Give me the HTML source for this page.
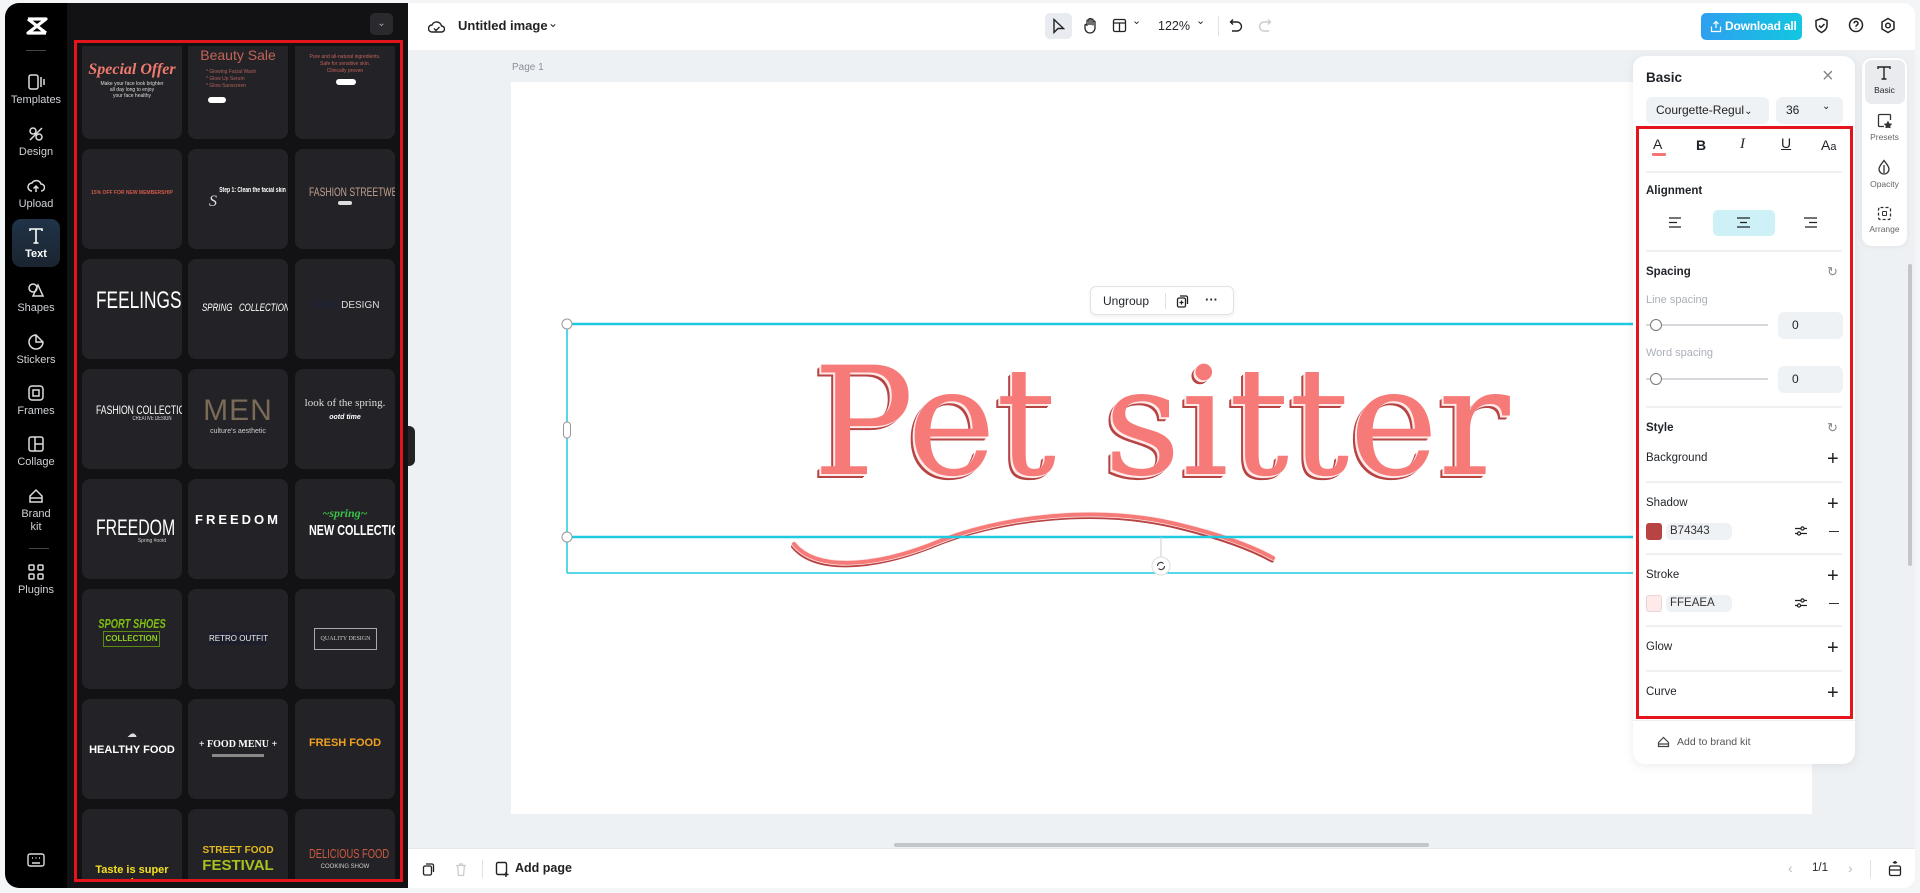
<!DOCTYPE html>
<html><head><meta charset="utf-8"><style>
*{box-sizing:border-box;margin:0;padding:0}
body{width:1920px;height:893px;overflow:hidden;background:#f4f5f7;font-family:"Liberation Sans",sans-serif;position:relative}
.a{position:absolute}
#rail{left:5px;top:3px;width:62px;height:885px;background:#000;border-radius:14px 0 0 14px}
#lp{left:67px;top:3px;width:341px;height:885px;background:#121214}
.ri{position:absolute;left:0;width:62px;text-align:center;color:#cfd2d6;font-size:11px}
.ri svg{display:block;margin:0 auto 3px}
.card{position:absolute;width:100px;height:100px;background:#232327;border-radius:8px;overflow:hidden;text-align:center;color:#fff}
.card div{position:absolute;left:0;right:0;text-align:center;white-space:nowrap}
.n{transform:scaleX(.72)}
#top{left:408px;top:3px;width:1507px;height:47px;background:#fff;border-radius:0 12px 0 0}
#cv{left:408px;top:50px;width:1507px;height:798px;background:#eef1f4}
#bot{left:408px;top:848px;width:1507px;height:40px;background:#fff;border-radius:0 0 12px 0;border-top:1px solid #e6e8eb}
#rp{left:1633px;top:56px;width:222px;height:708px;background:#fff;border-radius:12px;box-shadow:0 2px 10px rgba(0,0,0,.08)}
.lbl{position:absolute;font-size:12.5px;color:#1f2328;font-weight:bold}
.tx{position:absolute;font-size:12.5px;color:#1f2328;white-space:nowrap}
.hr{position:absolute;left:13px;width:196px;height:2px;background:#eef0f2}
.plus{position:absolute;left:194px;font-size:20px;color:#222;line-height:1}
.inp{position:absolute;background:#eff2f5;border-radius:6px;font-size:12px;color:#222}
</style></head><body>

<div id="rail" class="a">
 <svg class="a" style="left:21px;top:14px" width="22" height="18" viewBox="0 0 22 18"><path d="M2 2h18L2 16h18M2 2l18 14" stroke="#fff" stroke-width="3.2" fill="none" stroke-linejoin="round"/></svg>
 <div class="a" style="left:21px;top:47px;width:20px;height:1px;background:#444"></div>
 <div class="ri" style="top:70px"><svg width="18" height="18" viewBox="0 0 18 18" fill="none" stroke="#ddd" stroke-width="1.5"><rect x="2" y="2" width="9" height="14" rx="2"/><path d="M14 4v10M17 6v6"/></svg>Templates</div>
 <div class="ri" style="top:122px"><svg width="18" height="18" viewBox="0 0 18 18" fill="none" stroke="#ddd" stroke-width="1.5"><circle cx="6" cy="6" r="3"/><circle cx="12" cy="12" r="3"/><path d="M3 15L15 3"/></svg>Design</div>
 <div class="ri" style="top:174px"><svg width="18" height="18" viewBox="0 0 18 18" fill="none" stroke="#ddd" stroke-width="1.5"><path d="M5 14a4 4 0 0 1 0-8 5 5 0 0 1 9 1 3.5 3.5 0 0 1 0 7M9 15V9M6.5 11.5L9 9l2.5 2.5"/></svg>Upload</div>
 <div class="a" style="left:7px;top:216px;width:48px;height:48px;border-radius:9px;background:linear-gradient(#1f3348,#1b2430)"></div>
 <div class="ri" style="top:224px;color:#fff;font-weight:bold"><svg width="18" height="18" viewBox="0 0 18 18" fill="none" stroke="#fff" stroke-width="1.6"><path d="M3 4V2h12v2M9 2v14M6.5 16h5"/></svg>Text</div>
 <div class="ri" style="top:278px"><svg width="18" height="18" viewBox="0 0 18 18" fill="none" stroke="#ddd" stroke-width="1.5"><circle cx="6" cy="7" r="4"/><path d="M11 4l5 11H6z"/></svg>Shapes</div>
 <div class="ri" style="top:330px"><svg width="18" height="18" viewBox="0 0 18 18" fill="none" stroke="#ddd" stroke-width="1.5"><path d="M9 2a7 7 0 1 0 7 7l-7-7z M9 2v7h7"/></svg>Stickers</div>
 <div class="ri" style="top:381px"><svg width="18" height="18" viewBox="0 0 18 18" fill="none" stroke="#ddd" stroke-width="1.5"><rect x="2" y="2" width="14" height="14" rx="3"/><rect x="6" y="6" width="6" height="6"/></svg>Frames</div>
 <div class="ri" style="top:432px"><svg width="18" height="18" viewBox="0 0 18 18" fill="none" stroke="#ddd" stroke-width="1.5"><rect x="2" y="2" width="14" height="14" rx="2"/><path d="M8 2v14M8 9h8"/></svg>Collage</div>
 <div class="ri" style="top:484px;line-height:13px"><svg width="18" height="18" viewBox="0 0 18 18" fill="none" stroke="#ddd" stroke-width="1.5"><path d="M3 9l6-6 6 6v6H3z M3 11h12"/></svg>Brand<br>kit</div>
 <div class="a" style="left:24px;top:545px;width:20px;height:1px;background:#444"></div>
 <div class="ri" style="top:560px"><svg width="18" height="18" viewBox="0 0 18 18" fill="none" stroke="#ddd" stroke-width="1.5"><rect x="2" y="2" width="5" height="5" rx="1"/><rect x="11" y="2" width="5" height="5" rx="1"/><rect x="2" y="11" width="5" height="5" rx="1"/><rect x="11" y="11" width="5" height="5" rx="1"/></svg>Plugins</div>
 <svg class="a" style="left:22px;top:850px" width="18" height="15" viewBox="0 0 18 15" fill="none" stroke="#ddd" stroke-width="1.4"><rect x="1" y="1" width="16" height="12" rx="2"/><path d="M5 10h8M5 5h1M8.5 5h1M12 5h1"/></svg>
</div>

<div id="lp" class="a">
 <div class="a" style="left:303px;top:10px;width:23px;height:22px;background:#2a2a2e;border-radius:5px;color:#aaa;font-size:10px;text-align:center;line-height:22px">&#8964;</div>
</div>

<div class="a" style="left:74px;top:46px;width:329px;height:836px;overflow:hidden">
 <div class="card" style="left:8px;top:-7px"><div style="top:22px;font:italic bold 16px 'Liberation Serif',serif;color:#f07a6e">Special Offer</div><div style="top:42px;font-size:5px;color:#ddd;line-height:6px">Make your face look brighter<br>all day long to enjoy<br>your face healthy</div></div>
 <div class="card" style="left:114px;top:-7px"><div style="top:8px;font-size:14px;color:#c06458">Beauty Sale</div><div style="top:30px;font-size:5px;color:#b0605a;line-height:7px;left:18px;text-align:left">* Glowing Facial Wash<br>* Glow Up Serum<br>* Glow Sunscreen</div><div style="top:58px;left:20px;width:18px;height:6px;background:#fff;border-radius:3px"></div></div>
 <div class="card" style="left:221px;top:-7px"><div style="top:15px;font-size:5px;color:#c0605a;line-height:7px">Pure and all-natural ingredients.<br>Safe for sensitive skin.<br>Clinically proven</div><div style="top:40px;left:41px;width:20px;height:6px;background:#fff;border-radius:3px"></div></div>
 <div class="card" style="left:8px;top:103px"><div style="top:41px;font-size:5px;color:#d05a4a;font-weight:bold">15% OFF FOR NEW MEMBERSHIP</div></div>
 <div class="card" style="left:114px;top:103px"><div class="n" style="top:38px;font:bold 7px sans-serif;color:#fff;left:20px">Step 1: Clean the facial skin</div><div style="top:44px;left:-50px;font:italic 16px serif;color:#ddd">S</div></div>
 <div class="card" style="left:221px;top:103px"><div class="n" style="top:36px;font-size:12px;color:#c0a090">FASHION STREETWEAR</div><div style="top:52px;left:43px;width:14px;height:4px;background:#ddd;border-radius:2px"></div></div>
 <div class="card" style="left:8px;top:213px"><div class="n" style="top:28px;font:24px sans-serif;color:#fff">FEELINGS</div></div>
 <div class="card" style="left:114px;top:213px"><div class="n" style="top:43px;font:italic 11px sans-serif;color:#fff">SPRING&nbsp;&nbsp;&nbsp;COLLECTION</div></div>
 <div class="card" style="left:221px;top:213px"><div style="top:41px;font-size:10px;color:#ddd"><span style="color:#1d2240">GOOD</span>DESIGN</div></div>
 <div class="card" style="left:8px;top:323px"><div class="n" style="top:34px;font:12px sans-serif;color:#fff">FASHION COLLECTION</div><div class="n" style="top:47px;font:6px sans-serif;color:#ddd;left:40px">CREATIVE DESIGN</div></div>
 <div class="card" style="left:114px;top:323px"><div style="top:25px;font-size:30px;color:#7a6a58;letter-spacing:1px">MEN</div><div style="top:59px;font-size:7px;color:#ccc">culture's aesthetic</div></div>
 <div class="card" style="left:221px;top:323px"><div style="top:28px;font:11px 'Liberation Serif',serif;color:#ddd">look of the spring.</div><div style="top:45px;font:italic bold 7px sans-serif;color:#fff">ootd time</div></div>
 <div class="card" style="left:8px;top:433px"><div class="n" style="top:36px;font:22px sans-serif;color:#fff">FREEDOM</div><div style="top:59px;font-size:5px;color:#ccc;left:40px">Spring #ootd</div></div>
 <div class="card" style="left:114px;top:433px"><div style="top:33px;font:bold 13px sans-serif;color:#fff;letter-spacing:3px">FREEDOM</div></div>
 <div class="card" style="left:221px;top:433px"><div style="top:27px;font:italic bold 12px 'Liberation Serif',serif;color:#3cbf4a">~spring~</div><div class="n" style="top:43px;font:bold 15px sans-serif;color:#fff">NEW COLLECTION</div></div>
 <div class="card" style="left:8px;top:543px"><div class="n" style="top:27px;font:italic bold 13px sans-serif;color:#7fbf10">SPORT SHOES</div><div style="top:42px;left:21px;width:57px;height:16px;border:1px solid #5a8a10;font:bold 8px sans-serif;color:#8fcf1a;line-height:14px">COLLECTION</div></div>
 <div class="card" style="left:114px;top:543px"><div style="top:43px;left:21px;width:58px;height:13px;background:#1c1e2c;font:8px sans-serif;color:#eee;line-height:13px">RETRO OUTFIT</div></div>
 <div class="card" style="left:221px;top:543px"><div style="top:39px;left:19px;width:63px;height:22px;border:1px solid #aaa;font:6px 'Liberation Serif',serif;color:#ccc;line-height:20px">QUALITY DESIGN</div></div>
 <div class="card" style="left:8px;top:653px"><div style="top:45px;font:bold 11px sans-serif;color:#fff">HEALTHY FOOD</div><div style="top:30px;font-size:10px;color:#ddd">&#9729;</div></div>
 <div class="card" style="left:114px;top:653px"><div style="top:40px;font:bold 10px 'Liberation Serif',serif;color:#fff">+ FOOD MENU +</div><div style="top:55px;left:24px;width:52px;height:3px;background:#888"></div></div>
 <div class="card" style="left:221px;top:653px"><div style="top:38px;font:bold 11px sans-serif;color:#f0a020">FRESH FOOD</div></div>
 <div class="card" style="left:8px;top:763px"><div style="top:55px;font:bold 11px sans-serif;color:#f5e020">Taste is super</div><div style="top:68px;font:bold 11px sans-serif;color:#f5e020">spicy</div></div>
 <div class="card" style="left:114px;top:763px"><div style="top:36px;font:bold 10px sans-serif;color:#e0b820">STREET FOOD</div><div style="top:48px;font:bold 15px sans-serif;color:#a8c020">FESTIVAL</div></div>
 <div class="card" style="left:221px;top:763px"><div class="n" style="top:37px;font:13px sans-serif;color:#d05a40">DELICIOUS FOOD</div><div style="top:55px;font:6px sans-serif;color:#ccc">COOKING SHOW</div></div>
</div>
<div class="a" style="left:74px;top:40px;width:329px;height:842px;border:3px solid #e3141c"></div>

<div id="top" class="a">
 <svg class="a" style="left:20px;top:16px" width="17" height="15" viewBox="0 0 17 15" fill="none" stroke="#222" stroke-width="1.4"><path d="M4 13a3.5 3.5 0 0 1 0-7 5 5 0 0 1 9.5 1 3 3 0 0 1 0 6z M6 9.5l2 2 3.5-3.5"/></svg>
 <div class="tx" style="left:50px;top:15px;font-size:13px;font-weight:bold;color:#222">Untitled image</div>
 <div class="tx" style="left:140px;top:13px;font-size:12px">&#8964;</div>
 <div class="a" style="left:637px;top:10px;width:27px;height:26px;background:#e8ebef;border-radius:5px"></div>
 <svg class="a" style="left:644px;top:15px" width="13" height="16" viewBox="0 0 13 16" fill="none" stroke="#222" stroke-width="1.4"><path d="M2 1.5v13l4-4h5.5z"/></svg>
 <svg class="a" style="left:675px;top:14px" width="15" height="17" viewBox="0 0 15 17" fill="none" stroke="#222" stroke-width="1.3"><path d="M4 9V4a1 1 0 0 1 2 0v4V2.5a1 1 0 0 1 2 0V8V3a1 1 0 0 1 2 0v5.5V5a1 1 0 0 1 2 0v6a5 5 0 0 1-10 0L2 9a1 1 0 0 1 2-1"/></svg>
 <svg class="a" style="left:704px;top:15px" width="15" height="15" viewBox="0 0 15 15" fill="none" stroke="#222" stroke-width="1.3"><rect x="1.5" y="1.5" width="12" height="12" rx="1.5"/><path d="M1.5 5h12M7.5 5v8.5"/></svg>
 <div class="tx" style="left:724px;top:11px;font-size:11px">&#8964;</div>
 <div class="tx" style="left:750px;top:16px;font-size:12.5px">122%</div>
 <div class="tx" style="left:788px;top:11px;font-size:11px">&#8964;</div>
 <div class="a" style="left:810px;top:13px;width:1px;height:20px;background:#e0e2e5"></div>
 <svg class="a" style="left:821px;top:15px" width="14" height="15" viewBox="0 0 14 15" fill="none" stroke="#222" stroke-width="1.4"><path d="M4 1.5L1.5 4 4 6.5M1.5 4h6.5a4.5 4.5 0 0 1 0 9H3"/></svg>
 <svg class="a" style="left:850px;top:15px" width="14" height="15" viewBox="0 0 14 15" fill="none" stroke="#ccc" stroke-width="1.4"><path d="M10 1.5L12.5 4 10 6.5M12.5 4H6a4.5 4.5 0 0 0 0 9h5"/></svg>
 <div class="a" style="left:1293px;top:10px;width:101px;height:27px;border-radius:5px;background:linear-gradient(90deg,#2f9ff0,#12c6e0);color:#fff;font-size:12px;font-weight:bold;line-height:27px;padding-left:24px;white-space:nowrap;letter-spacing:-.2px">Download all</div>
 <svg class="a" style="left:1302px;top:17px" width="12" height="13" viewBox="0 0 12 13" fill="none" stroke="#fff" stroke-width="1.2"><path d="M6 8V1.5M3.5 4L6 1.5 8.5 4M1.5 6.5v5h9v-5"/></svg>
 <svg class="a" style="left:1406px;top:14px" width="15" height="17" viewBox="0 0 15 17" fill="none" stroke="#222" stroke-width="1.5"><path d="M7.5 1.5l5.5 2v5c0 3.5-2.5 5.5-5.5 7-3-1.5-5.5-3.5-5.5-7v-5z M5 8.5l2 2 3.5-3.5"/></svg>
 <svg class="a" style="left:1440px;top:14px" width="16" height="16" viewBox="0 0 16 16" fill="none" stroke="#222" stroke-width="1.5"><circle cx="8" cy="8" r="6.5"/><path d="M6 6.3a2 2 0 1 1 2.5 2c-.5.2-.5.7-.5 1.4M8 11.5v.5"/></svg>
 <svg class="a" style="left:1472px;top:14px" width="16" height="17" viewBox="0 0 16 17" fill="none" stroke="#222" stroke-width="1.5"><path d="M8 1.5l6 3.5v7l-6 3.5-6-3.5v-7z"/><circle cx="8" cy="8.5" r="2.3"/></svg>
</div>

<div id="cv" class="a">
 <div class="tx" style="left:104px;top:12px;font-size:10px;color:#8a9099">Page 1</div>
 <div class="a" style="left:103px;top:32px;width:1301px;height:732px;background:#fff"></div>
 <div class="a" style="left:486px;top:793px;width:535px;height:4px;background:#c2c5c9;border-radius:2px"></div>
 <div class="a" style="left:1500px;top:214px;width:4px;height:302px;background:#c2c5c9;border-radius:2px"></div>
</div>
<div class="a" style="left:408px;top:426px;width:7px;height:40px;background:#222;border-radius:0 6px 6px 0"></div>

<svg class="a" style="left:0;top:0" width="1920" height="893">
 <path d="M794 544 C815 570,870 568,930 545 C1000 515,1100 505,1180 525 C1225 536,1255 548,1273 558" fill="none" stroke="#b74343" stroke-width="4" stroke-linecap="round" transform="translate(-1 2.5)"/>
 <path d="M794 544 C815 570,870 568,930 545 C1000 515,1100 505,1180 525 C1225 536,1255 548,1273 558" fill="none" stroke="#ffeaea" stroke-width="5.5" stroke-linecap="round"/>
 <path d="M794 544 C815 570,870 568,930 545 C1000 515,1100 505,1180 525 C1225 536,1255 548,1273 558" fill="none" stroke="#f67b78" stroke-width="4" stroke-linecap="round"/>
 <line x1="567" y1="324" x2="1633" y2="324" stroke="#1ecbe0" stroke-width="2.5"/>
 <line x1="567" y1="537" x2="1633" y2="537" stroke="#1ecbe0" stroke-width="2.5"/>
 <line x1="567" y1="324" x2="567" y2="573" stroke="#1ecbe0" stroke-width="1.5"/>
 <line x1="567" y1="573" x2="1633" y2="573" stroke="#1ecbe0" stroke-width="1.5"/>
 <line x1="1161" y1="537" x2="1161" y2="560" stroke="#ccc" stroke-width="1"/>
 <circle cx="567" cy="324" r="5" fill="#fff" stroke="#999"/>
 <circle cx="567" cy="537" r="5" fill="#fff" stroke="#999"/>
 <rect x="563.5" y="422" width="7" height="16" rx="3.5" fill="#fff" stroke="#999"/>
 <circle cx="1161" cy="566" r="9" fill="#fff" stroke="#ddd"/>
 <path d="M1157.5 566a3.5 3.5 0 0 1 6-2.5M1164.5 566a3.5 3.5 0 0 1-6 2.5" stroke="#444" stroke-width="1.2" fill="none"/>
</svg>
<div class="a" style="left:813px;top:348px;font:150px 'DejaVu Serif',serif;color:#f67b78;line-height:150px;text-shadow:-1px 1px 0 #ffeaea,-2px 2px 0 #ffeaea,-3px 3px 0 #b74343,-4px 4px 0 #b74343;white-space:nowrap">Pet sitter</div>
<div class="a" style="left:1090px;top:286px;width:144px;height:29px;background:#fff;border:1px solid #dfe2e6;border-radius:6px;box-shadow:0 2px 5px rgba(0,0,0,.06)">
 <div class="tx" style="left:12px;top:7px;font-size:12px">Ungroup</div>
 <div class="a" style="left:74px;top:6px;width:1px;height:16px;background:#e0e2e5"></div>
 <svg class="a" style="left:85px;top:7px" width="13" height="14" viewBox="0 0 13 14" fill="none" stroke="#222" stroke-width="1.3"><rect x="1.5" y="4" width="8" height="9" rx="1.5"/><path d="M4 2h6a1.5 1.5 0 0 1 1.5 1.5V10M5.5 6.5v4M3.5 8.5h4"/></svg>
 <div class="tx" style="left:114px;top:5px;font-size:13px;font-weight:bold">···</div>
</div>

<div id="bot" class="a">
 <svg class="a" style="left:14px;top:13px" width="13" height="15" viewBox="0 0 13 15" fill="none" stroke="#222" stroke-width="1.3"><rect x="1.5" y="4" width="8" height="9" rx="1.5"/><path d="M4 2h6a1.5 1.5 0 0 1 1.5 1.5V10"/></svg>
 <svg class="a" style="left:47px;top:13px" width="12" height="15" viewBox="0 0 12 15" fill="none" stroke="#ccc" stroke-width="1.3"><path d="M1 3.5h10M4.5 3.5V2h3v1.5M2.5 3.5l1 10h5l1-10"/></svg>
 <div class="a" style="left:74px;top:11px;width:1px;height:18px;background:#e0e2e5"></div>
 <svg class="a" style="left:87px;top:12px" width="15" height="16" viewBox="0 0 15 16" fill="none" stroke="#222" stroke-width="1.4"><rect x="1.5" y="1.5" width="10" height="12" rx="1.5"/><path d="M11 11v5M8.5 13.5h5"/></svg>
 <div class="tx" style="left:107px;top:12px;font-size:12.5px;font-weight:bold;color:#222">Add page</div>
 <div class="tx" style="left:1380px;top:11px;font-size:14px;color:#bbb">&#8249;</div>
 <div class="tx" style="left:1404px;top:13px;font-size:11.5px">1/1</div>
 <div class="tx" style="left:1440px;top:11px;font-size:14px;color:#bbb">&#8250;</div>
 <div class="a" style="left:1462px;top:11px;width:1px;height:18px;background:#e0e2e5"></div>
 <svg class="a" style="left:1480px;top:11px" width="14" height="17" viewBox="0 0 14 17" fill="none" stroke="#222" stroke-width="1.3"><rect x="1.5" y="6" width="11" height="9.5" rx="1.5"/><path d="M1.5 10h11M7 1.5v2.5M5 3l2-1.5L9 3"/></svg>
</div>

<div class="a" style="left:1862px;top:58px;width:45px;height:188px;background:#fff;border-radius:10px;box-shadow:0 1px 6px rgba(0,0,0,.06)">
 <div class="a" style="left:3px;top:2px;width:40px;height:44px;background:#e9ebee;border-radius:7px"></div>
 <svg class="a" style="left:14px;top:7px" width="16" height="16" viewBox="0 0 16 16" fill="none" stroke="#222" stroke-width="1.4"><path d="M2 4V2h12v2M8 2v12M5.5 14h5"/></svg>
 <div class="tx" style="left:0;width:45px;text-align:center;top:27px;font-size:8.5px">Basic</div>
 <svg class="a" style="left:15px;top:55px" width="15" height="15" viewBox="0 0 15 15" fill="none" stroke="#333" stroke-width="1.3"><path d="M13.5 7V2.5a1 1 0 0 0-1-1h-10a1 1 0 0 0-1 1v10a1 1 0 0 0 1 1H7"/><path d="M11 9l1 2 2 .3-1.5 1.4.4 2L11 13.8l-1.9.9.4-2L8 11.3l2-.3z" fill="#333"/></svg>
 <div class="tx" style="left:0;width:45px;text-align:center;top:74px;font-size:8.5px;color:#666">Presets</div>
 <svg class="a" style="left:15px;top:101px" width="14" height="16" viewBox="0 0 14 16" fill="none" stroke="#333" stroke-width="1.3"><path d="M7 1.5C4 5.5 2 7.5 2 10a5 5 0 0 0 10 0c0-2.5-2-4.5-5-8.5z M7 6v8"/></svg>
 <div class="tx" style="left:0;width:45px;text-align:center;top:121px;font-size:8.5px;color:#666">Opacity</div>
 <svg class="a" style="left:15px;top:148px" width="15" height="15" viewBox="0 0 15 15" fill="none" stroke="#333" stroke-width="1.3" stroke-dasharray="3 2"><rect x="1.5" y="1.5" width="12" height="12" rx="2"/></svg>
 <div class="a" style="left:20px;top:153px;width:5px;height:5px;border:1.3px solid #333;border-radius:1px"></div>
 <div class="tx" style="left:0;width:45px;text-align:center;top:166px;font-size:8.5px;color:#666">Arrange</div>
</div>

<div id="rp" class="a">
 <div class="lbl" style="left:13px;top:14px;font-size:13.5px">Basic</div>
 <div class="tx" style="left:189px;top:9px;font-size:20px;color:#888">&#215;</div>
 <div class="inp" style="left:13px;top:41px;width:123px;height:27px;line-height:27px;padding-left:10px">Courgette-Regul<span style="font-size:10px">&#8964;</span></div>
 <div class="inp" style="left:143px;top:41px;width:67px;height:27px;line-height:27px;padding-left:10px">36<span style="position:absolute;left:46px;top:-4px;font-size:10px">&#8964;</span></div>
 <div class="tx" style="left:20px;top:80px;font-size:14px">A</div>
 <div class="a" style="left:19px;top:97px;width:14px;height:3px;background:#f47575;border-radius:1px"></div>
 <div class="tx" style="left:63px;top:81px;font-size:14px;font-weight:bold">B</div>
 <div class="tx" style="left:107px;top:80px;font:italic 15px 'Liberation Serif',serif">I</div>
 <div class="tx" style="left:148px;top:79px;font-size:14px;text-decoration:underline">U</div>
 <div class="tx" style="left:188px;top:81px;font-size:14px">A<span style="font-size:11px">a</span></div>
 <div class="hr" style="top:115px"></div>
 <div class="lbl" style="left:13px;top:129px;font-size:11.5px">Alignment</div>
 <div class="a" style="left:80px;top:154px;width:62px;height:26px;background:#cdf1f7;border-radius:5px"></div>
 <svg class="a" style="left:36px;top:161px" width="13" height="11" viewBox="0 0 13 11" stroke="#222" stroke-width="1.3"><path d="M0 1h12M0 5.5h8M0 10h12"/></svg>
 <svg class="a" style="left:104px;top:161px" width="13" height="11" viewBox="0 0 13 11" stroke="#222" stroke-width="1.3"><path d="M0 1h13M3 5.5h7M0 10h13"/></svg>
 <svg class="a" style="left:171px;top:161px" width="13" height="11" viewBox="0 0 13 11" stroke="#222" stroke-width="1.3"><path d="M0 1h13M5 5.5h8M1 10h12"/></svg>
 <div class="hr" style="top:194px"></div>
 <div class="lbl" style="left:13px;top:210px;font-size:11.5px">Spacing</div>
 <div class="tx" style="left:194px;top:208px;font-size:13px;color:#888">&#8635;</div>
 <div class="tx" style="left:13px;top:238px;font-size:11px;color:#aab0b8">Line spacing</div>
 <div class="a" style="left:13px;top:268px;width:122px;height:2px;background:#d5d9de"></div>
 <div class="a" style="left:17px;top:263px;width:12px;height:12px;border-radius:50%;background:#fff;border:1.3px solid #777"></div>
 <div class="inp" style="left:145px;top:256px;width:65px;height:27px;line-height:27px;padding-left:14px">0</div>
 <div class="tx" style="left:13px;top:291px;font-size:11px;color:#aab0b8">Word spacing</div>
 <div class="a" style="left:13px;top:322px;width:122px;height:2px;background:#d5d9de"></div>
 <div class="a" style="left:17px;top:317px;width:12px;height:12px;border-radius:50%;background:#fff;border:1.3px solid #777"></div>
 <div class="inp" style="left:145px;top:310px;width:65px;height:27px;line-height:27px;padding-left:14px">0</div>
 <div class="hr" style="top:350px"></div>
 <div class="lbl" style="left:13px;top:366px;font-size:11.5px">Style</div>
 <div class="tx" style="left:194px;top:364px;font-size:13px;color:#888">&#8635;</div>
 <div class="tx" style="left:13px;top:396px;font-size:11.5px">Background</div>
 <div class="plus" style="top:393px">+</div>
 <div class="hr" style="top:425px"></div>
 <div class="tx" style="left:13px;top:441px;font-size:11.5px">Shadow</div>
 <div class="plus" style="top:438px">+</div>
 <div class="a" style="left:13px;top:467px;width:16px;height:17px;background:#b74343;border-radius:3px"></div>
 <div class="inp" style="left:33px;top:467px;width:66px;height:17px;line-height:17px;padding-left:4px;font-size:11.5px;color:#333">B74343</div>
 <svg class="a" style="left:162px;top:469px" width="12" height="12" viewBox="0 0 12 12" fill="none" stroke="#222" stroke-width="1.2"><path d="M0 3.5h12M0 8.5h12"/><circle cx="7.5" cy="3.5" r="1.6" fill="#fff"/><circle cx="4" cy="8.5" r="1.6" fill="#fff"/></svg>
 <div class="a" style="left:196px;top:475px;width:10px;height:1.3px;background:#333"></div>
 <div class="hr" style="top:497px"></div>
 <div class="tx" style="left:13px;top:513px;font-size:11.5px">Stroke</div>
 <div class="plus" style="top:510px">+</div>
 <div class="a" style="left:13px;top:539px;width:16px;height:17px;background:#ffeaea;border:1px solid #e8d6d6;border-radius:3px"></div>
 <div class="inp" style="left:33px;top:539px;width:66px;height:17px;line-height:17px;padding-left:4px;font-size:11.5px;color:#333">FFEAEA</div>
 <svg class="a" style="left:162px;top:541px" width="12" height="12" viewBox="0 0 12 12" fill="none" stroke="#222" stroke-width="1.2"><path d="M0 3.5h12M0 8.5h12"/><circle cx="7.5" cy="3.5" r="1.6" fill="#fff"/><circle cx="4" cy="8.5" r="1.6" fill="#fff"/></svg>
 <div class="a" style="left:196px;top:547px;width:10px;height:1.3px;background:#333"></div>
 <div class="hr" style="top:569px"></div>
 <div class="tx" style="left:13px;top:585px;font-size:11.5px">Glow</div>
 <div class="plus" style="top:582px">+</div>
 <div class="hr" style="top:614px"></div>
 <div class="tx" style="left:13px;top:630px;font-size:11.5px">Curve</div>
 <div class="plus" style="top:627px">+</div>
 <div class="a" style="left:0;top:664px;width:222px;height:1px;background:#eceef1"></div>
 <svg class="a" style="left:24px;top:680px" width="13" height="12" viewBox="0 0 13 12" fill="none" stroke="#444" stroke-width="1.2"><path d="M1.5 6.5l5-5 5 5v4h-10z M1.5 8h10"/></svg>
 <div class="tx" style="left:44px;top:680px;font-size:10.5px;color:#555">Add to brand kit</div>
</div>
<div class="a" style="left:1636px;top:126px;width:217px;height:593px;border:3px solid #e3141c"></div>
</body></html>
